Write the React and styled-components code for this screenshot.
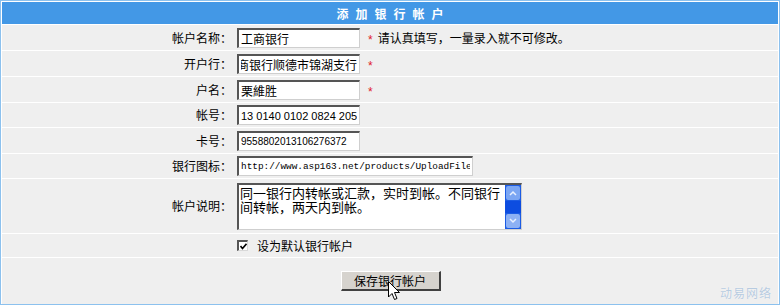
import React, { useEffect, useRef } from 'react';
import styled, { createGlobalStyle } from 'styled-components';

const GlobalStyle = createGlobalStyle`
  body {
    margin: 0;
    background: #fff;
    font-family: "Noto Sans CJK SC", "Liberation Sans", sans-serif;
    font-size: 12px;
    color: #000;
  }
`;

const Panel = styled.div`
  position: relative;
  box-sizing: border-box;
  width: 780px;
  height: 305px;
  border: 1px solid #8cc1ee;
  padding: 1px;
  background: #fff;
  display: flex;
  flex-direction: column;
  gap: 1px;
`;

const Header = styled.div`
  height: 22px;
  flex: none;
  background: #4398e6;
  color: #fff;
  font-weight: 700;
  font-size: 12px;
  letter-spacing: 7px;
  padding-left: 7px;
  display: flex;
  align-items: center;
  justify-content: center;
`;

const Row = styled.div`
  height: ${p => p.h}px;
  flex: none;
  background: #efefef;
  display: grid;
  grid-template-columns: 230px 1fr;
  align-items: center;
`;

const Label = styled.div`
  text-align: right;
  white-space: nowrap;
  line-height: 12px;
`;

const Value = styled.div`
  padding-left: 5px;
  display: flex;
  align-items: center;
  grid-column: ${p => (p.full ? '1 / -1' : 'auto')};
  justify-content: ${p => (p.full ? 'center' : 'flex-start')};
`;

const TextInput = styled.input`
  box-sizing: border-box;
  width: ${p => p.w}px;
  height: 20px;
  margin: 0;
  padding: 0 2px;
  border-style: solid;
  border-width: 2px 1px 1px 2px;
  border-color: #555 #cfcfcf #cfcfcf #555;
  background: #fff;
  color: #000;
  font-family: ${p => p.font || '"Noto Sans CJK SC", sans-serif'};
  font-size: ${p => p.size || 12}px;
  outline: none;
`;

const Required = styled.span`
  color: #e0202a;
  font-family: "Liberation Sans", sans-serif;
  font-size: 12px;
  padding: 5px 0 0 8px;
`;

const Hint = styled.span`
  margin-left: 5px;
  font-size: 12px;
`;

const AreaBox = styled.div`
  box-sizing: border-box;
  width: 285px;
  height: 47px;
  display: flex;
  border-style: solid;
  border-width: 2px 1px 1px 2px;
  border-color: #555 #cfcfcf #cfcfcf #555;
  background: #fff;
`;

const Area = styled.textarea`
  flex: 1;
  margin: 0;
  padding: 1px 1px 0;
  border: 0;
  resize: none;
  outline: none;
  overflow: hidden;
  font-family: "Noto Sans CJK SC", sans-serif;
  font-size: 13px;
  line-height: 14px;
  color: #000;
`;

const ScrollBar = styled.div`
  width: 16px;
  display: flex;
  flex-direction: column;
  background: #1c5ce4;
`;

const ScrollButton = styled.div`
  height: 14px;
  margin: 1px;
  border-radius: 2px;
  background: ${p => p.bg};
  display: flex;
  align-items: center;
  justify-content: center;
`;

const ScrollTrack = styled.div`
  flex: 1;
  background: #0d4de0;
`;

const CheckLabel = styled.label`
  display: flex;
  align-items: center;
  gap: 9px;
  padding-left: 5px;
  font-size: 12px;
`;

const CheckBox = styled.span`
  box-sizing: border-box;
  width: 11px;
  height: 11px;
  border-style: solid;
  border-width: 2px 1px 1px 2px;
  border-color: #555 #d8d8d8 #d8d8d8 #555;
  background: #fff;
  display: flex;
  align-items: center;
  justify-content: center;
`;

const ButtonWrap = styled.div`
  position: relative;
  padding-right: 4px;
`;

const Button = styled.button`
  box-sizing: border-box;
  width: 100px;
  height: 20px;
  margin: 0;
  padding: 0;
  background: #d6d3ce;
  border-style: solid;
  border-width: 1px 2px 2px 1px;
  border-color: #fff #404040 #404040 #fff;
  font-family: "Noto Sans CJK SC", sans-serif;
  font-size: 12px;
  color: #000;
`;

const Cursor = styled.svg`
  position: absolute;
  left: 47px;
  top: 10px;
`;

const Watermark = styled.div`
  position: absolute;
  right: 7px;
  bottom: 3px;
  font-size: 12px;
  color: #b7cbe0;
  text-shadow: 0 0 1px #fff;
  letter-spacing: 1px;
`;

const Arrow = ({ up }) => (
  <svg width="8" height="6" viewBox="0 0 8 6">
    <path d={up ? 'M1 5 L4 2 L7 5' : 'M1 1 L4 4 L7 1'} fill="none" stroke="#e8f0ff" strokeWidth="1.5" />
  </svg>
);

const fields = [
  { label: '帐户名称：', value: '工商银行', w: 123, h: 25, required: true, hint: '请认真填写，一量录入就不可修改。' },
  { label: '开户行：', value: '工商银行顺德市锦湖支行', w: 123, h: 25, required: true, scrollEnd: true },
  { label: '户名：', value: '栗維胜', w: 123, h: 25, required: true },
  { label: '帐号：', value: '13 0140 0102 0824 205', w: 123, h: 24, font: '"Liberation Sans", sans-serif', size: 11 },
  { label: '卡号：', value: '9558802013106276372', w: 123, h: 25, font: '"Liberation Sans", sans-serif', size: 10 },
  { label: '银行图标：', value: 'http://www.asp163.net/products/UploadFiles/bank/icbc.gif', w: 236, h: 24, font: '"Liberation Mono", monospace', size: 9.4 },
];

const Field = ({ f }) => {
  const ref = useRef(null);
  useEffect(() => {
    if (f.scrollEnd && ref.current) ref.current.scrollLeft = ref.current.scrollWidth;
  }, [f.scrollEnd]);
  return (
    <Row h={f.h}>
      <Label>{f.label}</Label>
      <Value>
        <TextInput ref={ref} w={f.w} font={f.font} size={f.size} defaultValue={f.value} />
        {f.required && <Required>*</Required>}
        {f.hint && <Hint>{f.hint}</Hint>}
      </Value>
    </Row>
  );
};

export default function App() {
  return (
    <>
      <GlobalStyle />
      <Panel>
        <Header>添加银行帐户</Header>
        {fields.map(f => <Field key={f.label} f={f} />)}
        <Row h={54}>
          <Label>帐户说明：</Label>
          <Value>
            <AreaBox>
              <Area defaultValue="同一银行内转帐或汇款，实时到帐。不同银行间转帐，两天内到帐。" />
              <ScrollBar>
                <ScrollButton bg="#7ba6f3"><Arrow up /></ScrollButton>
                <ScrollTrack />
                <ScrollButton bg="#8db1f4"><Arrow /></ScrollButton>
              </ScrollBar>
            </AreaBox>
          </Value>
        </Row>
        <Row h={23}>
          <div />
          <CheckLabel>
            <CheckBox>
              <svg width="7" height="7" viewBox="0 0 7 7">
                <path d="M0.5 3 L2.5 5.5 L6.5 0.8" fill="none" stroke="#000" strokeWidth="1.6" />
              </svg>
            </CheckBox>
            设为默认银行帐户
          </CheckLabel>
        </Row>
        <Row h={46}>
          <Value full>
            <ButtonWrap>
              <Button type="button">保存银行帐户</Button>
              <Cursor width="13" height="20" viewBox="0 0 13 20">
                <path d="M0.5 0.5 L0.5 16 L4 12.5 L6.5 18.5 L9 17.5 L6.5 11.5 L11.5 11.5 Z" fill="#fff" stroke="#000" strokeWidth="1" />
              </Cursor>
            </ButtonWrap>
          </Value>
        </Row>
        <Watermark>动易网络</Watermark>
      </Panel>
    </>
  );
}
